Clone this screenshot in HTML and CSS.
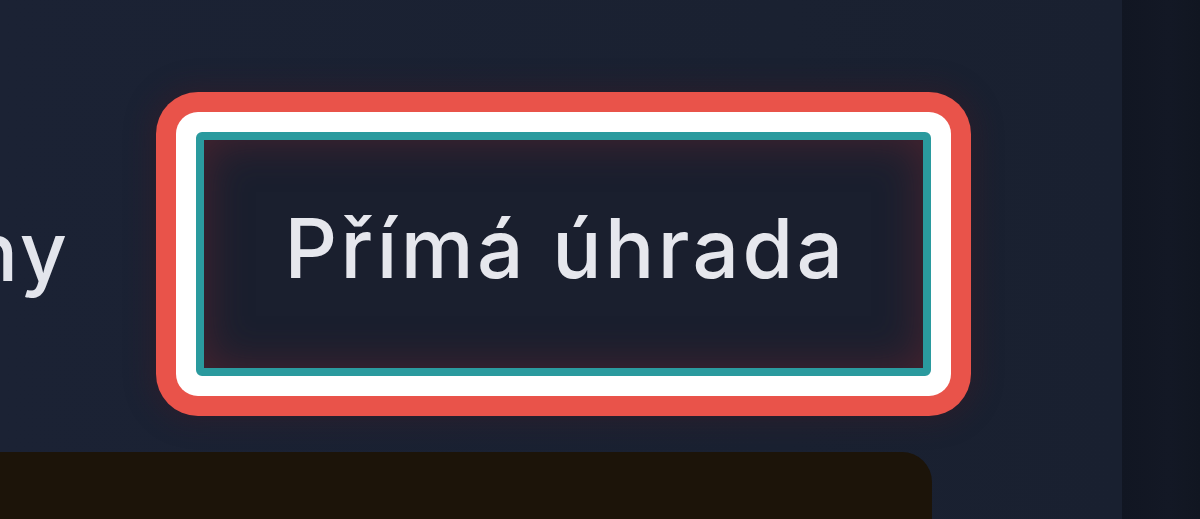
FILE: index.html
```html
<!DOCTYPE html>
<html lang="cs">
<head>
<meta charset="utf-8">
<title>Platba</title>
<link rel="stylesheet" href="styles.css">
</head>
<body>
<div class="page">
  <main class="content">
    <div class="tabs">
      <div class="tab-label"><span>Ceny</span></div>
      <div class="ring-outer">
        <div class="ring-inner">
          <button class="tab-btn" type="button">Přímá úhrada</button>
        </div>
      </div>
    </div>
    <div class="panel"></div>
  </main>
  <aside class="sidebar"></aside>
</div>
</body>
</html>
```
FILE: styles.css
```css
html, body {
  margin: 0;
  padding: 0;
}
body {
  background: #1a2131;
  font-family: "Inter", "Noto Sans", sans-serif;
  overflow: hidden;
}
.page {
  display: flex;
  height: 519px;
  width: 1200px;
  overflow: hidden;
}
.content {
  flex: 1;
  display: flex;
  flex-direction: column;
  background: linear-gradient(90deg, #1b2234 0%, #1a2131 70%, #192030 100%);
  min-width: 0;
}
.sidebar {
  width: 78px;
  flex: none;
  background: linear-gradient(90deg, #111622 0%, #131825 60%, #111621 100%);
}
.tabs {
  display: flex;
  align-items: center;
  gap: 86px;
  padding-top: 92px;
}
.tab-label {
  width: 70px;
  flex: none;
  display: flex;
  justify-content: flex-end;
  white-space: nowrap;
  font-size: 82px;
  font-weight: 500;
  letter-spacing: 3px;
  color: #e3e5ec;
  line-height: 1;
  padding-bottom: 4px;
}
.ring-outer {
  flex: none;
  padding: 20px;
  border-radius: 42px;
  background: #e9534a;
  box-shadow: 0 0 26px 6px rgba(70, 25, 35, 0.35);
}
.ring-inner {
  padding: 20px;
  border-radius: 22px;
  background: #ffffff;
}
.tab-btn {
  display: block;
  width: 735px;
  height: 244px;
  box-sizing: border-box;
  border: 8px solid #2a9a9e;
  border-radius: 6px;
  background: #1a1f2e;
  color: #e6e7ed;
  font-family: "Inter", "Noto Sans", sans-serif;
  font-size: 82px;
  font-weight: 500;
  letter-spacing: 3.4px;
  line-height: 1;
  padding: 0 0 10px 4px;
  cursor: pointer;
  box-shadow: inset 0 0 44px rgba(105, 38, 48, 0.6);
}
.panel {
  margin-top: 36px;
  width: 932px;
  flex: 1;
  background: #1c1409;
  border-radius: 0 30px 0 0;
}
```
